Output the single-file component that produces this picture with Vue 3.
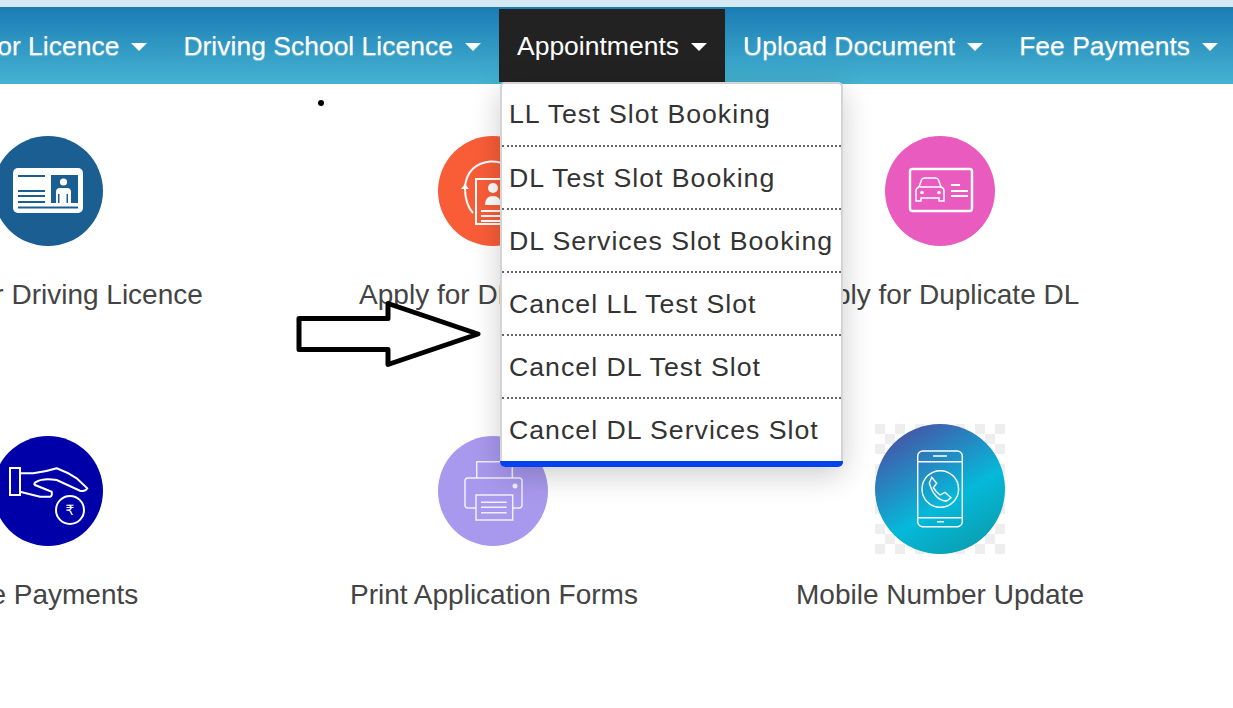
<script setup>
const navItems = [
  { label: 'Apply for Licence' },
  { label: 'Driving School Licence' },
  { label: 'Appointments', active: true },
  { label: 'Upload Document' },
  { label: 'Fee Payments' },
]

const slots = [
  'LL Test Slot Booking',
  'DL Test Slot Booking',
  'DL Services Slot Booking',
  'Cancel LL Test Slot',
  'Cancel DL Test Slot',
  'Cancel DL Services Slot',
]
</script>

<template>
  <div class="page">
    <div class="top-strip"></div>

    <nav class="nav">
      <a v-for="item in navItems" :key="item.label" class="nav-item" :class="{ active: item.active }">
        {{ item.label }}<span class="caret"></span>
      </a>
    </nav>

    <div class="grid">
      <div class="tile">
        <svg class="icon" viewBox="0 0 110 110">
          <circle cx="55" cy="55" r="55" fill="#1a5e92" />
          <rect x="20" y="32" width="70" height="45" rx="5" fill="#fff" />
          <rect x="58" y="39" width="27" height="28" fill="#1a5e92" />
          <circle cx="70.500" cy="46" r="3.600" fill="#fff" />
          <path d="M63 67V56q0-4 4-4h7q4 0 4 4v11h-3v-9h-1.500v9h-7v-9H65v9z" fill="#fff" />
          <path d="M25 40h27M25 55h27M25 60h27M25 66h27M25 71.500h60" stroke="#1a5e92" stroke-width="1.800" fill="none" />
        </svg>
        <p class="label">Apply for Driving Licence</p>
      </div>

      <div class="tile">
        <svg class="icon nudge" viewBox="0 0 110 110">
          <circle cx="55" cy="55" r="55" fill="#f95d38" />
          <path d="M27 50Q30 28 52 25.500Q62 25 70 30" stroke="#fff" stroke-width="2" fill="none" />
          <path d="M27 52Q27 68 35 77" stroke="#fff" stroke-width="2" fill="none" />
          <path d="M23 53l4-5 4 5z" fill="#fff" />
          <rect x="38" y="43" width="36" height="45" fill="#f95d38" stroke="#fff" stroke-width="2" />
          <circle cx="55" cy="52" r="5" fill="#fff" />
          <path d="M47 69q0-9 8-9t8 9z" fill="#fff" />
          <path d="M43 75h26M43 80h26M43 85h26" stroke="#fff" stroke-width="2" fill="none" />
        </svg>
        <p class="label">Apply for DL Renewal</p>
      </div>

      <div class="tile">
        <svg class="icon" viewBox="0 0 110 110">
          <circle cx="55" cy="55" r="55" fill="#e95bbf" />
          <rect x="25" y="33" width="62" height="42" rx="2.500" fill="none" stroke="#fff" stroke-width="2.400" />
          <path d="M31 65V55q0-3 3-4l2.500-7q.6-2 3-2h11q2.400 0 3 2l2.500 7q3 1 3 4v10h-5v-3H36v3z" fill="none" stroke="#fff" stroke-width="1.500" />
          <path d="M35 51h21" stroke="#fff" stroke-width="1.500" />
          <circle cx="37" cy="56.500" r="1.800" fill="#fff" />
          <circle cx="54" cy="56.500" r="1.800" fill="#fff" />
          <path d="M66 49h9M66 55h17M66 60h17" stroke="#fff" stroke-width="2" fill="none" />
        </svg>
        <p class="label">Apply for Duplicate DL</p>
      </div>

      <div class="tile">
        <svg class="icon" viewBox="0 0 110 110">
          <circle cx="55" cy="55" r="55" fill="#0000a8" />
          <rect x="17" y="32" width="10" height="27" fill="none" stroke="#fff" stroke-width="2" />
          <path d="M27 37.300H40.300Q52 36 63.700 32.300 74 36 83.700 42.300L94.300 52.300Q92 56 87 54.700L63.700 44Q50 42 43.700 45.700 40 47.500 42 49L58.700 55.700Q59.500 60 57 60.700H47L27 55.700" fill="none" stroke="#fff" stroke-width="2" />
          <circle cx="77" cy="74" r="14" fill="none" stroke="#fff" stroke-width="2" />
          <text x="77" y="79" text-anchor="middle" class="rupee">₹</text>
        </svg>
        <p class="label">Fee Payments</p>
      </div>

      <div class="tile">
        <svg class="icon nudge" viewBox="0 0 110 110">
          <circle cx="55" cy="55" r="55" fill="#a899ee" />
          <g fill="none" stroke="#fff" stroke-opacity=".85" stroke-width="1.500">
            <path d="M38.700 42V25.700H74.300V42" />
            <path d="M38 72H30q-3 0-3-3V45q0-3 3-3H81q3 0 3 3V69q0 3-3 3H74.700" />
            <rect x="38" y="59" width="36.700" height="25" />
            <path d="M43 66.300H68.700M43 71.300H68.700M43 76.700H68.700" />
          </g>
          <circle cx="77" cy="50" r="2.500" fill="#fff" fill-opacity=".85" />
        </svg>
        <p class="label">Print Application Forms</p>
      </div>

      <div class="tile">
        <div class="checker">
          <svg class="icon-large" viewBox="0 0 130 130">
            <defs>
              <linearGradient id="mobileFill" x1="0.2" y1="0" x2="0.8" y2="1">
                <stop offset="0" stop-color="#4a4fa5" />
                <stop offset="0.6" stop-color="#05b9d9" />
                <stop offset="1" stop-color="#0a9cae" />
              </linearGradient>
            </defs>
            <circle cx="65" cy="65" r="65" fill="url(#mobileFill)" />
            <g fill="none" stroke="#fff" stroke-width="1.400">
              <rect x="42.700" y="27" width="44.600" height="75.700" rx="5" />
              <path d="M42.700 37.700H87.300M42.700 93.700H87.300" />
              <circle cx="65.300" cy="65" r="18.300" />
              <path d="M56.700 53.300L61.700 59.300 58.300 63.700Q61 68 65 71L70 68.300 76 73.700 71.700 77Q60 77 54.300 59.300Z" />
            </g>
            <path d="M58 32H72M62 97.700H69" stroke="#fff" stroke-width="1.500" fill="none" />
          </svg>
        </div>
        <p class="label">Mobile Number Update</p>
      </div>
    </div>

    <div class="dropdown">
      <ul class="dropdown-list">
        <li v-for="slot in slots" :key="slot" class="dropdown-item">{{ slot }}</li>
      </ul>
      <div class="dropdown-bar"></div>
    </div>

    <svg class="arrow" width="200" height="80" viewBox="0 0 200 80">
      <path d="M4 18.500H93V3.500L183 34 93 64.500V49.500H4Z" fill="#fff" stroke="#000" stroke-width="5" stroke-linejoin="round" />
    </svg>
    <span class="dot"></span>
  </div>
</template>

<style>
html, body { margin: 0; background: #fff; overflow: hidden; }
</style>

<style scoped>
.page {
  position: relative;
  width: 1233px;
  height: 708px;
  overflow: hidden;
  font-family: "Liberation Sans", Arial, sans-serif;
}
.top-strip { height: 7px; background: #d6eaf5; }

.nav {
  display: flex;
  justify-content: flex-end;
  height: 73px;
  padding: 2px 0;
  margin-right: -3px;
  background: linear-gradient(#1b7cb5, #45b3d1);
}
.nav-item {
  display: flex;
  align-items: center;
  flex: none;
  padding: 2px 18px 0;
  font-size: 26.500px;
  color: #fff;
  white-space: nowrap;
  text-shadow: 0 1px 1px rgba(255, 255, 255, .45);
}
.nav-item.active { background: #222; text-shadow: none; }
.caret {
  width: 0;
  height: 0;
  margin-left: 12px;
  border-top: 8px solid #fff;
  border-left: 8px solid transparent;
  border-right: 8px solid transparent;
}

.grid {
  display: grid;
  grid-template-columns: repeat(3, 446px);
  grid-auto-rows: 300px;
  margin-left: -175px;
  padding-top: 52px;
}
.tile {
  display: flex;
  flex-direction: column;
  align-items: center;
}
.icon { display: block; width: 110px; height: 110px; filter: blur(.7px); }
.icon.nudge { margin-right: 2px; }
.icon-large { display: block; width: 130px; height: 130px; filter: blur(.5px); }
.checker {
  width: 130px;
  height: 130px;
  margin: -12px 0 -8px;
  background-image: repeating-conic-gradient(#fff 0 25%, #eee 0 50%);
  background-size: 20px 20px;
}
.rupee { font-family: "DejaVu Sans", sans-serif; font-size: 14px; fill: #fff; }
.label {
  margin: 33px 0 0;
  font-size: 28px;
  line-height: 31px;
  color: #444;
  white-space: nowrap;
}

.dropdown {
  position: absolute;
  left: 500px;
  top: 82px;
  box-sizing: border-box;
  width: 343px;
  height: 385px;
  background: #fff;
  border: 2px solid #d4d4d4;
  border-bottom: 0;
  border-radius: 5px;
  box-shadow: 0 8px 30px 0 rgba(0, 0, 0, .2);
}
.dropdown-list { margin: 0; padding: 0; list-style: none; }
.dropdown-item {
  display: flex;
  align-items: center;
  box-sizing: border-box;
  height: 63px;
  padding: 1px 7px 0;
  font-size: 26.700px;
  letter-spacing: 1px;
  color: #333;
  white-space: nowrap;
  border-bottom: 2px dotted #666;
}
.dropdown-item:first-child { padding-top: 0; }
.dropdown-item:last-child { height: 62px; border-bottom: 0; }
.dropdown-bar {
  height: 6px;
  margin: 0 -2px;
  background: #0041f0;
  border-radius: 0 0 5px 5px;
}

.arrow { position: absolute; left: 295px; top: 300px; }
.dot {
  position: absolute;
  left: 318px;
  top: 100px;
  width: 6px;
  height: 6px;
  border-radius: 50%;
  background: #000;
}
</style>
